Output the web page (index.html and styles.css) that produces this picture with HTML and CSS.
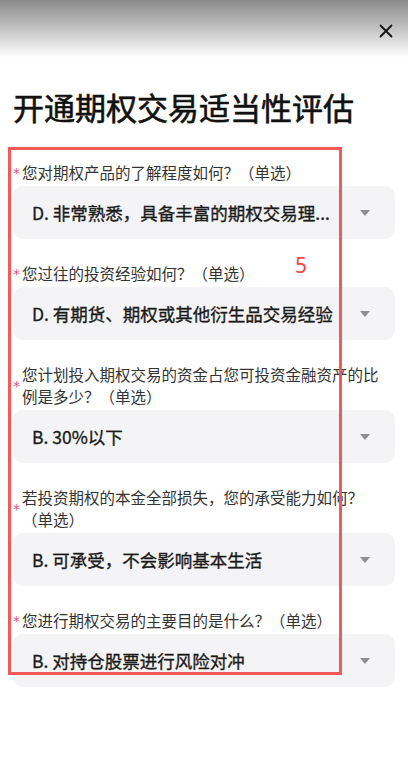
FILE: index.html
```html
<!DOCTYPE html>
<html lang="zh-CN">
<head>
<meta charset="utf-8">
<title>开通期权交易适当性评估</title>
<link rel="stylesheet" href="styles.css">
</head>
<body>
<div class="page">
  <header class="topbar">
    <button class="close" aria-label="关闭">
      <svg width="14" height="14" viewBox="0 0 14 14"><path d="M1.5 1.5 L12.5 12.5 M12.5 1.5 L1.5 12.5" stroke="#111" stroke-width="1.8" fill="none" stroke-linecap="round"/></svg>
    </button>
  </header>
  <h1 class="title">开通期权交易适当性评估</h1>
  <div class="form">
    <div class="q">
      <div class="label"><span class="star">*</span><span class="text">您对期权产品的了解程度如何？（单选）</span></div>
      <div class="select"><span class="value">D. 非常熟悉，具备丰富的期权交易理...</span><span class="arrow"></span></div>
    </div>
    <div class="q">
      <div class="label"><span class="star">*</span><span class="text">您过往的投资经验如何？（单选）</span></div>
      <div class="select"><span class="value">D. 有期货、期权或其他衍生品交易经验</span><span class="arrow"></span></div>
    </div>
    <div class="q">
      <div class="label"><span class="star">*</span><span class="text">您计划投入期权交易的资金占您可投资金融资产的比例是多少？（单选）</span></div>
      <div class="select"><span class="value">B. 30%以下</span><span class="arrow"></span></div>
    </div>
    <div class="q">
      <div class="label"><span class="star">*</span><span class="text">若投资期权的本金全部损失，您的承受能力如何？（单选）</span></div>
      <div class="select"><span class="value">B. 可承受，不会影响基本生活</span><span class="arrow"></span></div>
    </div>
    <div class="q">
      <div class="label"><span class="star">*</span><span class="text">您进行期权交易的主要目的是什么？（单选）</span></div>
      <div class="select"><span class="value">B. 对持仓股票进行风险对冲</span><span class="arrow"></span></div>
    </div>
  </div>
  <div class="annot"></div>
  <div class="annot-num">5</div>
</div>
</body>
</html>
```

FILE: styles.css
```css
* { box-sizing: border-box; }
html, body { margin: 0; padding: 0; background: #fff; }
body {
  font-family: "Noto Sans CJK SC", "Noto Sans", sans-serif;
  color: #222;
}
.page {
  position: relative;
  width: 408px;
  min-height: 773px;
  background: #fff;
}
.topbar {
  height: 58px;
  background: linear-gradient(to bottom, #8a8a8a 0%, #c4c4c4 50%, #ffffff 100%);
  display: flex;
  justify-content: flex-end;
  align-items: flex-start;
  padding: 24px 15px 0 0;
}
.close {
  border: 0;
  background: transparent;
  padding: 0;
  width: 14px;
  height: 14px;
  display: block;
}
.close svg { display: block; }
.title {
  margin: 29px 0 0 0;
  padding-left: 13px;
  font-size: 31px;
  line-height: 40px;
  font-weight: 400;
  -webkit-text-stroke: 0.6px #111;
  color: #111;
  letter-spacing: 0;
}
.form {
  margin-top: 34px;
  padding: 0 13px;
  display: flex;
  flex-direction: column;
  gap: 23px;
}
.q { display: flex; flex-direction: column; gap: 3px; }
.label {
  display: flex;
  align-items: center;
}
.star {
  width: 9px;
  flex: none;
  color: #e0557e;
  font-family: "DejaVu Sans", sans-serif;
  font-size: 14px;
  line-height: 14px;
  padding-top: 2px;
}
.text {
  max-width: 362px;
  font-size: 15.5px;
  line-height: 22px;
  color: #333;
}
.select {
  height: 53px;
  background: #f4f4f6;
  border-radius: 10px;
  display: flex;
  align-items: center;
  padding: 0 25px 0 19px;
}
.value {
  width: 308px;
  white-space: nowrap;
  overflow: hidden;
  font-size: 17.5px;
  font-weight: 400;
  -webkit-text-stroke: 0.35px #1a1a1a;
  color: #1a1a1a;
}
.arrow {
  margin-left: auto;
  width: 0;
  height: 0;
  border-left: 5px solid transparent;
  border-right: 5px solid transparent;
  border-top: 6px solid #8e8e92;
}
.annot {
  position: absolute;
  left: 8px;
  top: 147px;
  width: 334px;
  height: 528px;
  border: 3px solid #f25a5a;
}
.annot-num {
  position: absolute;
  left: 295px;
  top: 251px;
  font-family: "Noto Sans", sans-serif;
  font-size: 21px;
  line-height: 28px;
  color: #f24848;
}
```
